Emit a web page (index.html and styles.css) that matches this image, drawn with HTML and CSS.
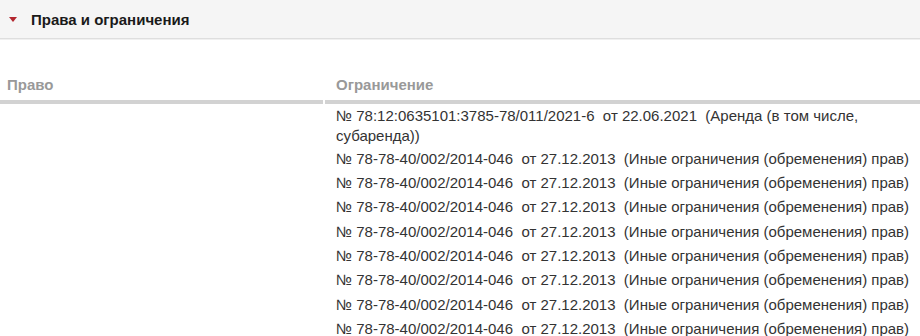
FILE: index.html
```html
<!DOCTYPE html>
<html lang="ru">
<head>
<meta charset="utf-8">
<title>Права и ограничения</title>
<link rel="stylesheet" href="styles.css">
</head>
<body>
<section class="panel">
  <header class="panel-head">
    <span class="caret"></span>
    <h2 class="panel-title">Права и ограничения</h2>
  </header>
  <div class="grid">
    <div class="th th-left">Право</div>
    <div class="th th-right">Ограничение</div>
    <div class="td td-left"></div>
    <div class="td td-right">
      <div class="item item-first">№ 78:12:0635101:3785-78/011/2021-6&nbsp; от 22.06.2021&nbsp; (Аренда (в том числе, субаренда))</div>
      <div class="item">№ 78-78-40/002/2014-046&nbsp; от 27.12.2013&nbsp; (Иные ограничения (обременения) прав)</div>
      <div class="item">№ 78-78-40/002/2014-046&nbsp; от 27.12.2013&nbsp; (Иные ограничения (обременения) прав)</div>
      <div class="item">№ 78-78-40/002/2014-046&nbsp; от 27.12.2013&nbsp; (Иные ограничения (обременения) прав)</div>
      <div class="item">№ 78-78-40/002/2014-046&nbsp; от 27.12.2013&nbsp; (Иные ограничения (обременения) прав)</div>
      <div class="item">№ 78-78-40/002/2014-046&nbsp; от 27.12.2013&nbsp; (Иные ограничения (обременения) прав)</div>
      <div class="item">№ 78-78-40/002/2014-046&nbsp; от 27.12.2013&nbsp; (Иные ограничения (обременения) прав)</div>
      <div class="item">№ 78-78-40/002/2014-046&nbsp; от 27.12.2013&nbsp; (Иные ограничения (обременения) прав)</div>
      <div class="item">№ 78-78-40/002/2014-046&nbsp; от 27.12.2013&nbsp; (Иные ограничения (обременения) прав)</div>
    </div>
  </div>
</section>
</body>
</html>
```

FILE: styles.css
```css
html, body {
  margin: 0;
  padding: 0;
  background: #ffffff;
}
body {
  font-family: "Liberation Sans", Arial, sans-serif;
  font-size: 15px;
  color: #333333;
  overflow: hidden;
}
.panel-head {
  display: flex;
  align-items: center;
  height: 38px;
  background: #f5f5f5;
  border-bottom: 1px solid #dedede;
  box-shadow: 0 1px 0 #f0f0f0;
  padding-left: 9px;
}
.caret {
  width: 0;
  height: 0;
  border-left: 4px solid transparent;
  border-right: 4px solid transparent;
  border-top: 5px solid #b3262e;
  margin-right: 14px;
}
.panel-title {
  margin: 0;
  font-size: 15px;
  font-weight: bold;
  color: #1a1a1a;
}
.grid {
  display: grid;
  grid-template-columns: 323px 1fr;
  column-gap: 2px;
  margin-top: 37px;
}
.th {
  font-size: 15px;
  font-weight: bold;
  color: #999999;
  padding: 0 0 7px 0;
  line-height: 17px;
  border-bottom: 4px solid #d2d2d2;
}
.th-left { padding-left: 7px; }
.th-right { padding-left: 11px; }
.td-right {
  padding: 0 10px 0 11px;
}
.item {
  line-height: 20px;
  padding: 2px 0 2.4px;
}
.item-first {
  line-height: 20.5px;
  padding: 1.5px 0 0;
}
```
